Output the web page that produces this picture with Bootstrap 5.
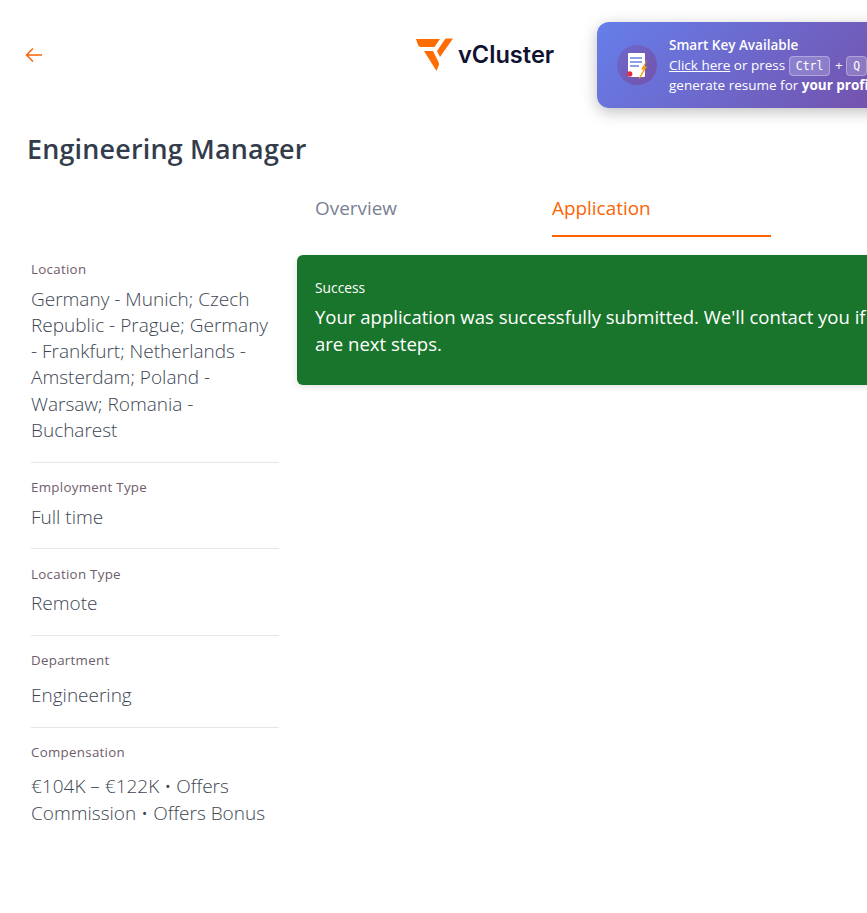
<!doctype html>
<html lang="en">
<head>
    <meta charset="utf-8">
    <meta name="viewport" content="width=device-width, initial-scale=1">
    <title>Engineering Manager</title>
    <link href="https://cdn.jsdelivr.net/npm/bootstrap@5.3.3/dist/css/bootstrap.min.css" rel="stylesheet">
    <style>
        html, body { overflow: hidden; height: 913px; background: #fff; }
        body { font-family: "Open Sans", "Noto Sans", sans-serif; color: #3d4653; }
        .page-wrap { width: 945px; position: relative; }
        .top-bar { height: 129px; padding-left: 25px; padding-bottom: 19px; }
        .back-link { line-height: 0; }
        .logo-box { margin-left: 373px; margin-top: -1px; gap: 5px; }
        .logo-word { font-family: Inter, sans-serif; font-weight: 600; font-size: 23.6px; color: #0f1330; letter-spacing: 0; line-height: 1; }
        .key-banner { position: absolute; left: 597px; top: 22px; width: 340px; height: 86px; border-radius: 12px; background: linear-gradient(135deg, #667eea, #764ba2); box-shadow: 0 4px 15px rgba(0,0,0,.25); color: #fff; padding: 0 0 0 20px; gap: 12px; font-size: 13.5px; line-height: 20px; }
        .key-circle { width: 40px; height: 40px; border-radius: 50%; background: linear-gradient(135deg, rgba(118,75,162,.35), rgba(118,75,162,.8)); flex: none; }
        .key-title { font-weight: 600; }
        .key-line { height: 20px; white-space: nowrap; }
        .key-banner a { color: #fff; }
        .key-banner kbd { font-family: "DejaVu Sans Mono", monospace; font-size: 11.5px; background: rgba(255,255,255,.2); border: 1px solid rgba(255,255,255,.3); border-radius: 4px; padding: 2px 6px; color: #fff; box-shadow: none; margin: 0 1px 0 0; }
        .job-title { font-size: 26.9px; font-weight: 600; color: #333c4b; margin: 0; padding-left: 27px; line-height: 40px; letter-spacing: .2px; }
        .job-body { padding-left: 31px; margin-top: 26px; }
        .side-col { width: 248px; flex: none; margin-top: 65px; }
        .main-col { margin-left: 18px; flex: 1; }
        .tab-row { gap: 18px; padding-left: 18px; height: 42px; }
        .tab-item { width: 219px; font-size: 18.9px; line-height: 26px; color: #7b7f92; }
        .tab-on { color: #fb6404; border-bottom: 2px solid #fb6404; }
        .ok-box { background: #1a752c; color: #fff; border-radius: 6px; margin-top: 18px; height: 130px; padding: 23px 18px; box-shadow: 0 2px 6px rgba(0,0,0,.12); }
        .ok-label { font-size: 13.8px; line-height: 20px; font-weight: 500; }
        .ok-text { font-size: 18.55px; line-height: 27px; margin-top: 5px; }
        .info-item { border-bottom: 1px solid #e4e6ea; padding-bottom: 18.500px; margin-bottom: 15.300px; }
        .info-item:last-child { border-bottom: 0; }
        .info-label { font-size: 13.3px; line-height: 18px; color: #6e5d6b; letter-spacing: .3px; margin-bottom: 7.500px; }
        .info-label-wide { margin-bottom: 12.500px; }
        .info-value { font-size: 19px; line-height: 26.3px; color: #3d4653; font-weight: 300; }
    </style>
</head>
<body>

<div class="page-wrap">
    <!-- Cabecera -->
    <div class="top-bar d-flex align-items-center">
        <a href="#" class="back-link">
            <svg width="18" height="18" viewBox="0 0 18 18" fill="none" stroke="#fb6404" stroke-width="1.5"><path d="M17 9H2M8 2.5 1.5 9 8 15.5"/></svg>
        </a>
        <div class="logo-box d-flex align-items-center">
            <svg width="37" height="34" viewBox="0 0 37 34">
                <path fill="#ff6c02" d="M0 1H24L18.500 9H5Q3 9 2 7Z"/>
                <path fill="#ff6c02" d="M29.500 .5H37L24 19 21 13Z"/>
                <path fill="#ff6c02" d="M8 13H17L22.500 24Q23.500 26 22.500 28L20.500 33Z"/>
            </svg>
            <span class="logo-word">vCluster</span>
        </div>
    </div>

    <!-- Aviso Smart Key -->
    <div class="key-banner d-flex align-items-center">
        <div class="key-circle d-flex align-items-center justify-content-center">
            <svg width="24" height="28" viewBox="0 0 24 28">
                <rect x="3" y="2" width="17" height="24" rx="1" fill="#fff"/>
                <path stroke="#6a7fe0" stroke-width="1.500" d="M5 7h12M5 11h12M5 15h9"/>
                <path fill="#f59e0b" d="M22.500 8 16 18.500H18.500L13.500 27.500 15 27.500 22 15.500H19.500Z"/>
                <circle cx="4.700" cy="23" r="2.700" fill="#dc2f45"/>
            </svg>
        </div>
        <div>
            <div class="key-line key-title">Smart Key Available</div>
            <div class="key-line"><a href="#">Click here</a> or press <kbd>Ctrl</kbd> + <kbd>Q</kbd> to</div>
            <div class="key-line">generate resume for <strong>your profile</strong></div>
        </div>
    </div>

    <h1 class="job-title">Engineering Manager</h1>

    <div class="job-body d-flex">
        <!-- Datos laterales -->
        <div class="side-col">
            <div class="info-item">
                <div class="info-label">Location</div>
                <div class="info-value">Germany - Munich; Czech Republic - Prague; Germany - Frankfurt; Netherlands - Amsterdam; Poland - Warsaw; Romania - Bucharest</div>
            </div>
            <div class="info-item">
                <div class="info-label">Employment Type</div>
                <div class="info-value">Full time</div>
            </div>
            <div class="info-item">
                <div class="info-label">Location Type</div>
                <div class="info-value">Remote</div>
            </div>
            <div class="info-item">
                <div class="info-label info-label-wide">Department</div>
                <div class="info-value">Engineering</div>
            </div>
            <div class="info-item">
                <div class="info-label info-label-wide">Compensation</div>
                <div class="info-value">€104K – €122K • Offers Commission • Offers Bonus</div>
            </div>
        </div>

        <!-- Contenido -->
        <div class="main-col">
            <div class="tab-row d-flex">
                <div class="tab-item">Overview</div>
                <div class="tab-item tab-on">Application</div>
            </div>
            <div class="ok-box">
                <div class="ok-label">Success</div>
                <div class="ok-text">Your application was successfully submitted. We'll contact you if there are next steps.</div>
            </div>
        </div>
    </div>
</div>

<script src="https://cdn.jsdelivr.net/npm/bootstrap@5.3.3/dist/js/bootstrap.bundle.min.js"></script>
</body>
</html>
